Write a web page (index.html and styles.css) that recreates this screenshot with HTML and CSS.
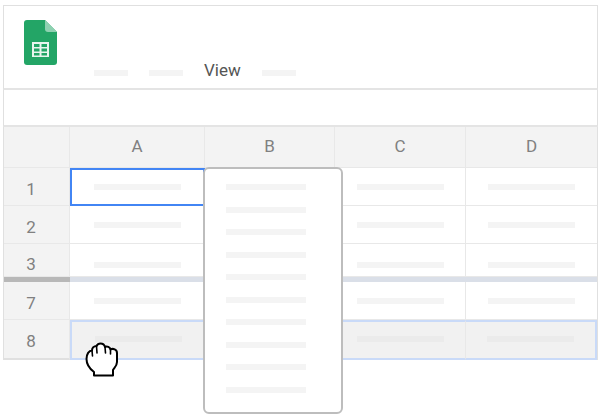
FILE: index.html
```html
<!DOCTYPE html>
<html lang="en">
<head>
    <meta charset="UTF-8">
    <title>Sheets view menu</title>
    <link rel="stylesheet" href="styles.css">
</head>
<body>

    <div class="sheet">
        <div class="toolbar">
            <svg class="logo" viewBox="0 0 33 45" width="33" height="45">
                <path d="M3 0H21L33 12V42a3 3 0 0 1-3 3H3a3 3 0 0 1-3-3V3a3 3 0 0 1 3-3Z" fill="#23a566"/>
                <path d="M21 0L33 12H24a3 3 0 0 1-3-3Z" fill="#8ed1b1"/>
                <path d="M8 22H25V37H8Z" fill="#e8f5ee"/>
                <path d="M10 24H15.5V27H10ZM17.5 24H23V27H17.5ZM10 28.500H15.500V31.500H10ZM17.500 28.500H23V31.500H17.500ZM10 33H15.500V35.500H10ZM17.500 33H23V35.500H17.500Z" fill="#23a566"/>
            </svg>
            <div class="menu">
                <span class="bar menu-bar"></span>
                <span class="bar menu-bar"></span>
                <span class="menu-item">View</span>
                <span class="bar menu-bar"></span>
            </div>
        </div>
        <div class="formula"></div>

        <div class="grid">
            <div class="head"></div>
            <div class="head">A</div>
            <div class="head">B</div>
            <div class="head">C</div>
            <div class="head last">D</div>

            <div class="num">1</div>
            <div class="cell active"><span class="bar"></span></div>
            <div class="cell"></div>
            <div class="cell"><span class="bar"></span></div>
            <div class="cell last"><span class="bar"></span></div>

            <div class="num">2</div>
            <div class="cell"><span class="bar"></span></div>
            <div class="cell"></div>
            <div class="cell"><span class="bar"></span></div>
            <div class="cell last"><span class="bar"></span></div>

            <div class="num cut">3</div>
            <div class="cell cut"><span class="bar"></span></div>
            <div class="cell cut"></div>
            <div class="cell cut"><span class="bar"></span></div>
            <div class="cell cut last"><span class="bar"></span></div>

            <div class="fold-head"></div>
            <div class="fold"></div>

            <div class="num">7</div>
            <div class="cell"><span class="bar"></span></div>
            <div class="cell"></div>
            <div class="cell"><span class="bar"></span></div>
            <div class="cell last"><span class="bar"></span></div>

            <div class="num end">8</div>
            <div class="cell picked first-picked"><span class="bar"></span></div>
            <div class="cell picked"></div>
            <div class="cell picked"><span class="bar"></span></div>
            <div class="cell picked last-picked"><span class="bar"></span></div>
        </div>

        <div class="dropdown">
            <span class="bar drop-bar"></span>
            <span class="bar drop-bar"></span>
            <span class="bar drop-bar"></span>
            <span class="bar drop-bar"></span>
            <span class="bar drop-bar"></span>
            <span class="bar drop-bar"></span>
            <span class="bar drop-bar"></span>
            <span class="bar drop-bar"></span>
            <span class="bar drop-bar"></span>
            <span class="bar drop-bar"></span>
        </div>

        <svg class="hand" viewBox="84 342 36 36" width="36" height="36">
            <path d="M94 375.500V372C90 369 86.500 365 86.500 359C86.500 354 89 350.500 92 350.500C92 348 94 346 96.500 346C97.500 344 99 343.500 100.500 343.500C103 343.500 104.500 345 105 347C107 346 110 347 110.500 349.500C113 348 117 349.500 117 353V362C117 366 114 368 113 370V375.500Z" fill="#fff" stroke="#000" stroke-width="2" stroke-linejoin="round"/>
            <path d="M92 350.500L92.500 356M96.500 346L97 353M105 347L105.500 353M110.500 349.500V354" fill="none" stroke="#000" stroke-width="1.600" stroke-linecap="round"/>
        </svg>
    </div>

</body>
</html>
```

FILE: styles.css
```css
body {
    margin: 0;
    padding: 5px 2px 0 3px;
    background-color: #fff;
    font-family: Roboto, "Liberation Sans", sans-serif;
    color: #808080;
}

.sheet {
    position: relative;
    height: 410px;
}

/* placeholder for text */
.bar {
    display: block;
    flex: none;
    width: 87px;
    height: 6px;
    background-color: #f4f4f4;
}

.toolbar {
    display: flex;
    height: 85px;
    box-sizing: border-box;
    padding: 14px 0 0 20px;
    border-top: 1px solid #e0e0e0;
    border-left: 1px solid #e0e0e0;
    border-right: 1px solid #e0e0e0;
    border-bottom: 2px solid #e4e4e4;
}
.logo {
    flex: none;
}
.menu {
    display: flex;
    align-items: center;
    gap: 21px;
    height: 20px;
    margin: 40px 0 0 37px;
}
.menu-bar {
    width: 34px;
    margin-top: 6px;
}
.menu-item {
    font-size: 17px;
    color: #555;
    line-height: 20px;
}

.formula {
    height: 37px;
    box-sizing: border-box;
    border-left: 1px solid #e0e0e0;
    border-right: 1px solid #e0e0e0;
    border-bottom: 2px solid #e4e4e4;
}

.grid {
    display: grid;
    grid-template-columns: 66px 135px 130px 131px 131px;
    grid-template-rows: 41px 38px 38px 33px 5px 38px 40px;
    border-left: 1px solid #e0e0e0;
    border-right: 1px solid #e0e0e0;
}

.head {
    display: flex;
    align-items: center;
    justify-content: center;
    background-color: #f3f3f3;
    border-right: 1px solid #e8e8e8;
    border-bottom: 1px solid #e8e8e8;
    font-size: 17px;
    padding-bottom: 2px;
    box-sizing: border-box;
}
.head.last {
    border-right: none;
}

.num {
    display: flex;
    align-items: center;
    justify-content: center;
    background-color: #f3f3f3;
    border-right: 1px solid #e8e8e8;
    border-bottom: 1px solid #e8e8e8;
    font-size: 17px;
    padding: 4px 11px 0 0;
    box-sizing: border-box;
}
.num.end {
    border-bottom: 2px solid #e0e0e0;
}
.num.cut {
    padding-top: 8px;
}

.cell {
    display: flex;
    justify-content: center;
    box-sizing: border-box;
    padding-top: 16px;
    border-right: 1px solid #e8e8e8;
    border-bottom: 1px solid #e8e8e8;
}
.cell.last {
    border-right: none;
}
.cell.cut {
    padding-top: 18px;
}

.cell.active {
    padding-top: 14px;
    border: 2px solid #4285f4;
}

.cell.picked {
    padding-top: 14px;
    background-color: #f1f1f1;
    border-top: 2px solid #c9daf8;
    border-bottom: 2px solid #c9daf8;
}
.picked .bar {
    background-color: #ebebeb;
}
.first-picked {
    border-left: 2px solid #c9daf8;
}
.last-picked {
    border-right: 2px solid #c9daf8;
}

.fold-head {
    background-color: #b8b8b8;
}
.fold {
    grid-column: span 4;
    background-color: #dadfe8;
}

.dropdown {
    position: absolute;
    left: 200px;
    top: 162px;
    display: flex;
    flex-direction: column;
    gap: 16.500px;
    width: 140px;
    height: 247px;
    box-sizing: border-box;
    padding: 15px 0 0 21px;
    background-color: #fff;
    border: 2px solid #bdbdbd;
    border-radius: 6px;
}
.drop-bar {
    width: 80px;
}

.hand {
    position: absolute;
    left: 81px;
    top: 337px;
}
```
